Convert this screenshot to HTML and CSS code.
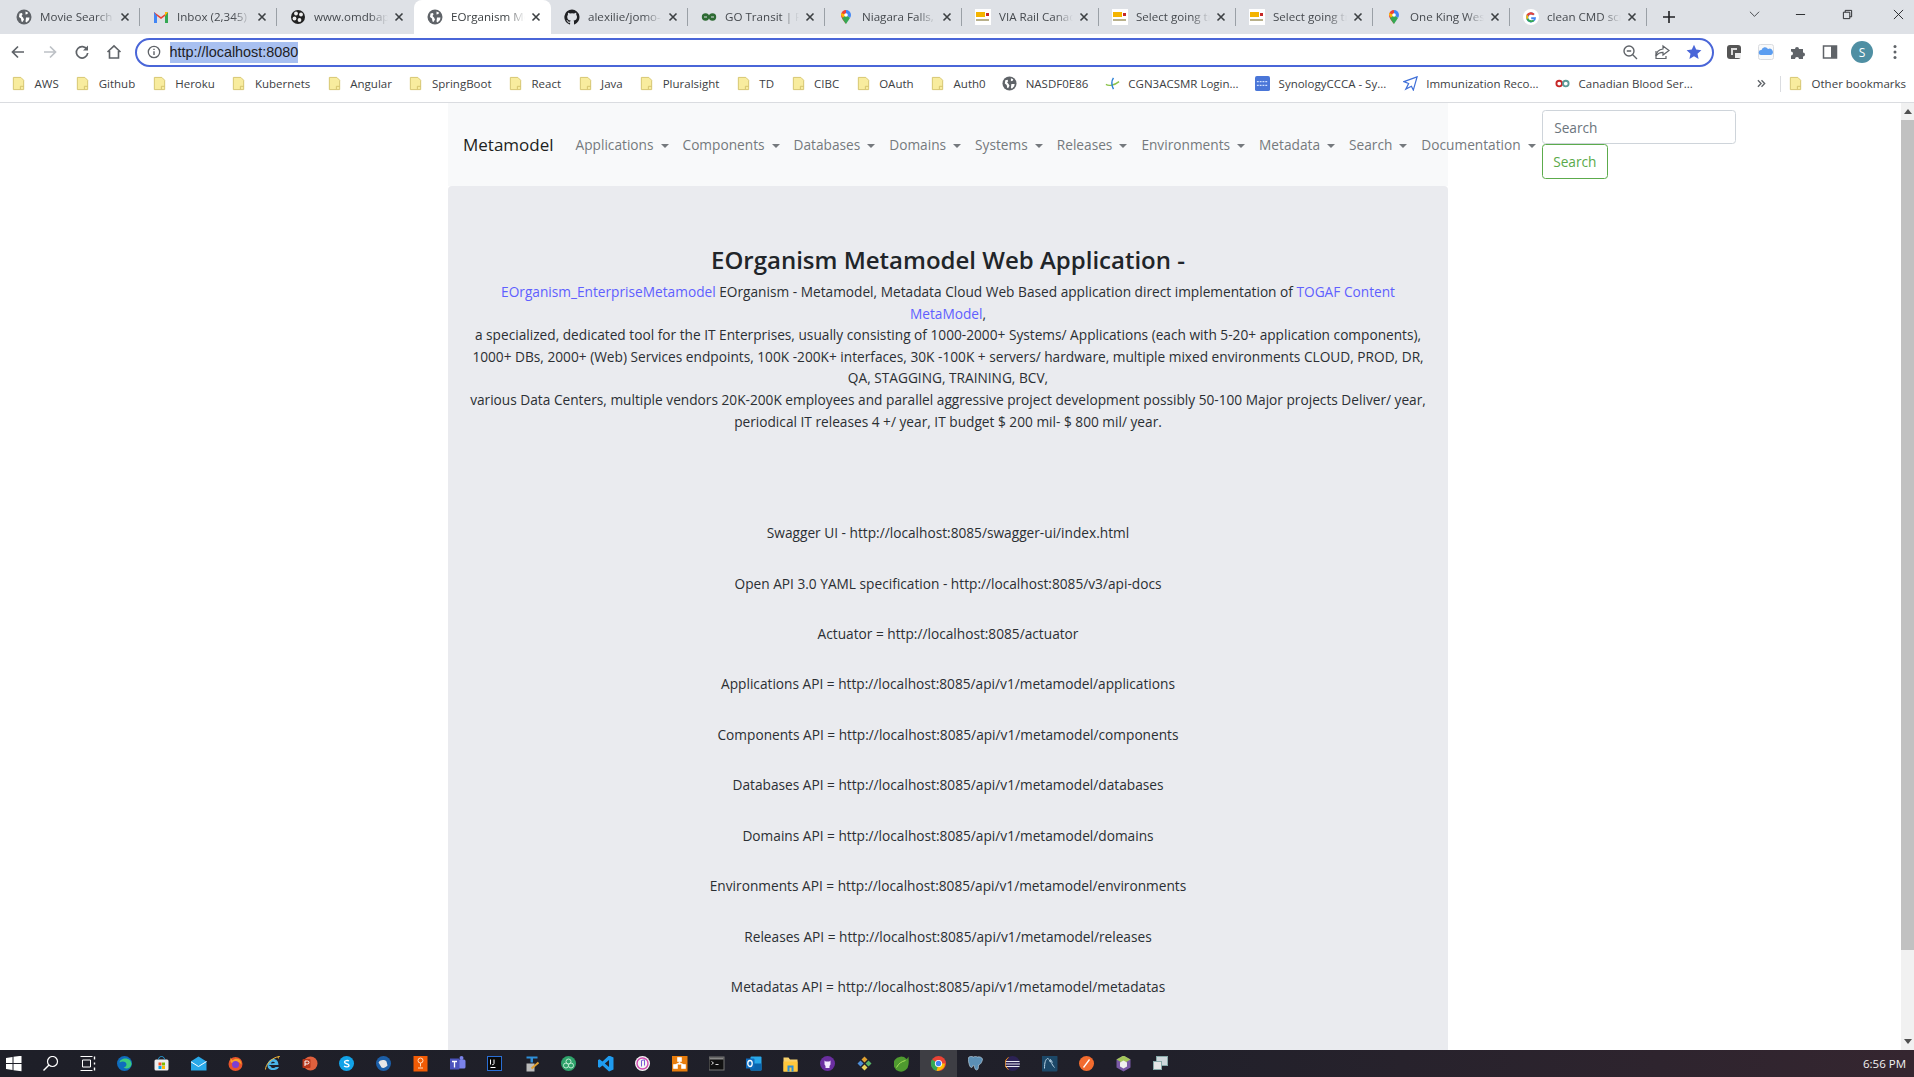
FILE: index.html
```html
<!DOCTYPE html>
<html lang="en">
<head>
<meta charset="utf-8">
<title>EOrganism Metamodel</title>
<link rel="stylesheet" href="styles.css">
</head>
<body>
<svg class="defs" width="0" height="0">
  <symbol id="globe" viewBox="0 0 16 16"><circle cx="8" cy="8" r="7.500" fill="#5f6368"/><path d="M3.500 4.500l2.500-.5.500 1.500-1 1.500 1.500 1.500 1 2-1.500 2.500-1-.5-.5-3-2-1.500zM9.500 2.500l2.500 1-.5 1.500-2 .5zM10 8.500h3.500l-.5 2.500-2.500 2.500-1-1z" fill="#fff"/></symbol>
  <symbol id="folder" viewBox="0 0 16 16"><path d="M2.500 1.500h8l3 3v10h-11z" fill="#f8ec9e" stroke="#d4c36c"/><path d="M10 14v-3h3.500" fill="none" stroke="#d4c36c"/></symbol>
  <symbol id="close" viewBox="0 0 10 10"><path d="M1.500 1.500l7 7M8.500 1.500l-7 7" stroke="#3c4043" stroke-width="1.600" fill="none"/></symbol>
  <symbol id="pin" viewBox="0 0 16 16"><path d="M8 1a5 5 0 0 0-5 5c0 3.500 5 9 5 9z" fill="#ea4335"/><path d="M8 1a5 5 0 0 1 5 5c0 1-.4 2-1 3L8 6z" fill="#4285f4"/><path d="M4 9c1 2 4 6 4 6l4-6-4-3z" fill="#34a853"/><path d="M3.300 4L8 6 5 8.500 3 6z" fill="#fbbc04"/><circle cx="8" cy="6" r="1.800" fill="#fff"/></symbol>
  <symbol id="via" viewBox="0 0 16 16"><rect width="16" height="16" fill="#fff"/><rect x="1" y="3" width="9" height="5" fill="#f4b400"/><rect x="11" y="4" width="3" height="3" fill="#c62828"/><rect x="1" y="10" width="13" height="2" fill="#b8b08a"/></symbol>
  <symbol id="g" viewBox="0 0 16 16"><circle cx="8" cy="8" r="8" fill="#fff"/><path d="M13 8.300H8.200v2h2.700a3 3 0 1 1-.8-4l1.500-1.400A5 5 0 1 0 13 8.300z" fill="#4285f4"/><path d="M3.600 5.500a5 5 0 0 1 8-.6L10.100 6.300a3 3 0 0 0-4.800 1z" fill="#ea4335"/><path d="M3.200 8a5 5 0 0 0 .4 2.500l1.700-1.300a3 3 0 0 1 0-1.900L3.600 5.500A5 5 0 0 0 3.200 8z" fill="#fbbc04"/><path d="M3.600 10.500a5 5 0 0 0 7.800 1.500l-1.500-1.300a3 3 0 0 1-4.600-1.500z" fill="#34a853"/></symbol>
</svg>

<div class="browser">
  <div class="tabstrip">
    <div class="tab"><svg class="fav"><use href="#globe"/></svg><span class="tab-title">Movie Search</span><svg class="tab-x"><use href="#close"/></svg></div>
    <div class="tab"><svg class="fav" viewBox="0 0 16 16"><path d="M1 3v11h3V7l4 3 4-3v7h3V3l-7 5z" fill="#ea4335"/><path d="M1 3v11h3V7z" fill="#4285f4"/><path d="M12 7v7h3V3z" fill="#34a853"/><path d="M15 3l-3 4V3z" fill="#fbbc04"/></svg><span class="tab-title">Inbox (2,345)</span><svg class="tab-x"><use href="#close"/></svg></div>
    <div class="tab no-sep"><svg class="fav" viewBox="0 0 16 16"><circle cx="8" cy="8" r="7" fill="#222"/><circle cx="6" cy="4.500" r="1.900" fill="#eee"/><circle cx="11" cy="5.500" r="1.900" fill="#eee"/><circle cx="4.500" cy="9.500" r="1.900" fill="#eee"/><circle cx="9.500" cy="11" r="1.900" fill="#eee"/></svg><span class="tab-title">www.omdbapi</span><svg class="tab-x"><use href="#close"/></svg></div>
    <div class="tab active"><svg class="fav"><use href="#globe"/></svg><span class="tab-title">EOrganism Meta</span><svg class="tab-x"><use href="#close"/></svg></div>
    <div class="tab"><svg class="fav" viewBox="0 0 16 16"><path d="M8 .5a7.700 7.700 0 0 0-2.400 15c.4.100.5-.2.500-.4v-1.400c-2.100.5-2.600-1-2.600-1-.3-.9-.8-1.100-.8-1.100-.7-.5.100-.5.100-.5.800.100 1.200.8 1.200.8.700 1.200 1.800.8 2.200.6.100-.5.300-.8.500-1-1.700-.2-3.500-.9-3.500-3.800 0-.8.300-1.500.8-2-.1-.2-.3-1 .1-2 0 0 .6-.2 2.100.8a7 7 0 0 1 3.800 0c1.500-1 2.100-.8 2.100-.8.400 1 .2 1.800.1 2 .5.500.8 1.200.8 2 0 2.900-1.800 3.600-3.500 3.800.3.200.5.700.5 1.400v2.100c0 .2.100.5.500.4A7.700 7.700 0 0 0 8 .5z" fill="#202124"/></svg><span class="tab-title">alexilie/jomo-</span><svg class="tab-x"><use href="#close"/></svg></div>
    <div class="tab"><svg class="fav" viewBox="0 0 16 16"><circle cx="4.500" cy="8" r="3.700" fill="#2e6b34"/><circle cx="11.500" cy="8" r="3.700" fill="#2e6b34"/><path d="M3 8h3M10 8h3" stroke="#dee1e6"/></svg><span class="tab-title">GO Transit | Re</span><svg class="tab-x"><use href="#close"/></svg></div>
    <div class="tab"><svg class="fav"><use href="#pin"/></svg><span class="tab-title">Niagara Falls, O</span><svg class="tab-x"><use href="#close"/></svg></div>
    <div class="tab"><svg class="fav"><use href="#via"/></svg><span class="tab-title">VIA Rail Canada</span><svg class="tab-x"><use href="#close"/></svg></div>
    <div class="tab"><svg class="fav"><use href="#via"/></svg><span class="tab-title">Select going tr</span><svg class="tab-x"><use href="#close"/></svg></div>
    <div class="tab"><svg class="fav"><use href="#via"/></svg><span class="tab-title">Select going tr</span><svg class="tab-x"><use href="#close"/></svg></div>
    <div class="tab"><svg class="fav"><use href="#pin"/></svg><span class="tab-title">One King West</span><svg class="tab-x"><use href="#close"/></svg></div>
    <div class="tab"><svg class="fav"><use href="#g"/></svg><span class="tab-title">clean CMD scr</span><svg class="tab-x"><use href="#close"/></svg></div>
    <svg class="newtab" viewBox="0 0 12 12"><path d="M6 0v12M0 6h12" stroke="#202124" stroke-width="1.600"/></svg>
    <div class="winctl">
      <svg class="ctl ctl-chev" viewBox="0 0 12 12"><path d="M1 3l5 5 5-5" fill="none" stroke="#3c4043"/></svg>
      <svg class="ctl ctl-min" viewBox="0 0 12 12"><path d="M1 6h10" stroke="#202124"/></svg>
      <svg class="ctl ctl-max" viewBox="0 0 12 12"><path d="M1.500 3.500h7v7h-7zM3.500 3.500v-2h7v7h-2" fill="none" stroke="#202124"/></svg>
      <svg class="ctl ctl-cls" viewBox="0 0 12 12"><path d="M1 1l10 10M11 1L1 11" stroke="#202124"/></svg>
    </div>
  </div>

  <div class="toolbar">
    <svg class="tool" viewBox="0 0 16 16"><path d="M14 8H2.500M8 2.500L2.500 8 8 13.500" fill="none" stroke="#5f6368" stroke-width="1.700"/></svg>
    <svg class="tool" viewBox="0 0 16 16"><path d="M2 8h11.500M8 2.500L13.500 8 8 13.500" fill="none" stroke="#bdc1c6" stroke-width="1.700"/></svg>
    <svg class="tool" viewBox="0 0 16 16"><path d="M13 5.500A5.700 5.700 0 1 0 13.700 9" fill="none" stroke="#5f6368" stroke-width="1.700"/><path d="M14 1.500v5h-5z" fill="#5f6368"/></svg>
    <svg class="tool" viewBox="0 0 16 16"><path d="M1.500 8L8 1.800 14.500 8M3.500 7v7h9V7" fill="none" stroke="#5f6368" stroke-width="1.600"/></svg>
    <div class="omnibox">
      <svg class="info" viewBox="0 0 16 16"><circle cx="8" cy="8" r="6.500" fill="none" stroke="#5f6368" stroke-width="1.500"/><path d="M8 7v4.500M8 4.200v1.600" stroke="#5f6368" stroke-width="1.600"/></svg>
      <span class="url">http://localhost:8080</span>
      <span class="omni-actions">
        <svg class="omni-ico" viewBox="0 0 16 16"><circle cx="7" cy="7" r="5" fill="none" stroke="#5f6368" stroke-width="1.400"/><path d="M10.500 10.500L15 15M4.800 7h4.400" stroke="#5f6368" stroke-width="1.400"/></svg>
        <svg class="omni-ico" viewBox="0 0 16 16"><path d="M9 2l6 4.500L9 11V8.300C5.500 8.300 3.500 9.800 2 12c.4-4 3-6.500 7-7z" fill="none" stroke="#5f6368" stroke-width="1.200"/><path d="M2 7v7.500h10V12" fill="none" stroke="#5f6368" stroke-width="1.200"/></svg>
        <svg class="omni-ico" viewBox="0 0 16 16"><path d="M8 .8l2.200 4.800 5.200.6-3.900 3.500 1.100 5.200L8 12.300l-4.600 2.600 1.100-5.200L.6 6.200l5.200-.6z" fill="#4a66d8"/></svg>
      </span>
    </div>
    <div class="tool-right">
      <svg class="ext" viewBox="0 0 16 16"><rect x="1" y="1" width="14" height="14" rx="3" fill="#555"/><path d="M5 4h6v2H7v5H5z" fill="#ddd"/><rect x="9" y="9" width="6" height="5" fill="#eee"/></svg>
      <svg class="ext" viewBox="0 0 16 16"><rect x=".5" y=".5" width="15" height="15" rx="2" fill="#f8f9fa" stroke="#dadce0"/><path d="M3 11a2.500 2.500 0 0 1 .5-5A3.500 3.500 0 0 1 10 5a3 3 0 0 1 3 6z" fill="#5b9df0"/></svg>
      <svg class="ext" viewBox="0 0 16 16"><path d="M1 5h4a2 2 0 1 1 4 0h4v3.500a2 2 0 1 1 0 4V15H9a2 2 0 1 0-4 0H1v-3.500a2 2 0 1 0 0-4z" fill="#5f6368"/></svg>
      <svg class="ext" viewBox="0 0 16 16"><rect x="1.500" y="2" width="13" height="12" fill="none" stroke="#5f6368" stroke-width="1.500"/><rect x="9" y="2" width="5.500" height="12" fill="#5f6368"/></svg>
      <span class="avatar">S</span>
      <svg class="dots" viewBox="0 0 4 16"><circle cx="2" cy="2.500" r="1.500" fill="#5f6368"/><circle cx="2" cy="8" r="1.500" fill="#5f6368"/><circle cx="2" cy="13.500" r="1.500" fill="#5f6368"/></svg>
    </div>
  </div>

  <div class="bookmarks">
    <span class="bm"><svg class="bm-ico"><use href="#folder"/></svg>AWS</span>
    <span class="bm"><svg class="bm-ico"><use href="#folder"/></svg>Github</span>
    <span class="bm"><svg class="bm-ico"><use href="#folder"/></svg>Heroku</span>
    <span class="bm"><svg class="bm-ico"><use href="#folder"/></svg>Kubernets</span>
    <span class="bm"><svg class="bm-ico"><use href="#folder"/></svg>Angular</span>
    <span class="bm"><svg class="bm-ico"><use href="#folder"/></svg>SpringBoot</span>
    <span class="bm"><svg class="bm-ico"><use href="#folder"/></svg>React</span>
    <span class="bm"><svg class="bm-ico"><use href="#folder"/></svg>Java</span>
    <span class="bm"><svg class="bm-ico"><use href="#folder"/></svg>Pluralsight</span>
    <span class="bm"><svg class="bm-ico"><use href="#folder"/></svg>TD</span>
    <span class="bm"><svg class="bm-ico"><use href="#folder"/></svg>CIBC</span>
    <span class="bm"><svg class="bm-ico"><use href="#folder"/></svg>OAuth</span>
    <span class="bm"><svg class="bm-ico"><use href="#folder"/></svg>Auth0</span>
    <span class="bm"><svg class="bm-ico"><use href="#globe"/></svg>NASDF0E86</span>
    <span class="bm"><svg class="bm-ico" viewBox="0 0 16 16"><path d="M1 9c3 2 9 1 14-3" fill="none" stroke="#8bc34a" stroke-width="1.500"/><path d="M9 2c-2 3-2 8 0 12" fill="none" stroke="#2a7fd5" stroke-width="1.500"/></svg>CGN3ACSMR Login...</span>
    <span class="bm"><svg class="bm-ico" viewBox="0 0 16 16"><rect width="16" height="16" rx="2" fill="#4a76d8"/><path d="M2 6h12M2 10h12" stroke="#cfe0ff" stroke-width="1.500" stroke-dasharray="2 1"/></svg>SynologyCCCA - Sy...</span>
    <span class="bm"><svg class="bm-ico" viewBox="0 0 16 16"><path d="M15 1L1 6l5 2-3 6 6-3 2 4z" fill="none" stroke="#3f6fd8" stroke-width="1.300"/></svg>Immunization Reco...</span>
    <span class="bm"><svg class="bm-ico" viewBox="0 0 16 16"><circle cx="4.500" cy="8" r="3" fill="none" stroke="#c62828" stroke-width="2"/><circle cx="11.500" cy="8" r="3" fill="none" stroke="#5a9a98" stroke-width="2"/></svg>Canadian Blood Ser...</span>
    <span class="bm-more">
      <svg class="chev2" viewBox="0 0 10 10"><path d="M1 1.500L4.500 5 1 8.500M5 1.500L8.500 5 5 8.500" fill="none" stroke="#5f6368" stroke-width="1.500"/></svg>
      <span class="bm-sep"></span>
      <span class="bm"><svg class="bm-ico"><use href="#folder"/></svg>Other bookmarks</span>
    </span>
  </div>

  <div class="viewport">
    <div class="page">
      <main class="container">
        <nav class="navbar">
          <a class="brand">Metamodel</a>
          <ul class="nav">
            <li class="nav-item">Applications</li>
            <li class="nav-item">Components</li>
            <li class="nav-item">Databases</li>
            <li class="nav-item">Domains</li>
            <li class="nav-item">Systems</li>
            <li class="nav-item">Releases</li>
            <li class="nav-item">Environments</li>
            <li class="nav-item">Metadata</li>
            <li class="nav-item">Search</li>
            <li class="nav-item">Documentation</li>
          </ul>
          <form class="search">
            <input class="search-input" type="text" placeholder="Search">
            <button class="search-btn" type="button">Search</button>
          </form>
        </nav>
        <section class="jumbotron">
          <h1 class="title">EOrganism Metamodel Web Application -</h1>
          <p class="intro"><a class="link">EOrganism_EnterpriseMetamodel</a> EOrganism - Metamodel, Metadata Cloud Web Based application direct implementation of <a class="link">TOGAF Content<br>MetaModel</a>,<br>
          a specialized, dedicated tool for the IT Enterprises, usually consisting of 1000-2000+ Systems/ Applications (each with 5-20+ application components),<br>
          1000+ DBs, 2000+ (Web) Services endpoints, 100K -200K+ interfaces, 30K -100K + servers/ hardware, multiple mixed environments CLOUD, PROD, DR,<br>
          QA, STAGGING, TRAINING, BCV,<br>
          various Data Centers, multiple vendors 20K-200K employees and parallel aggressive project development possibly 50-100 Major projects Deliver/ year,<br>
          periodical IT releases 4 +/ year, IT budget $ 200 mil- $ 800 mil/ year.</p>
          <ul class="api-list">
            <li>Swagger UI - http://localhost:8085/swagger-ui/index.html</li>
            <li>Open API 3.0 YAML specification - http://localhost:8085/v3/api-docs</li>
            <li>Actuator = http://localhost:8085/actuator</li>
            <li>Applications API = http://localhost:8085/api/v1/metamodel/applications</li>
            <li>Components API = http://localhost:8085/api/v1/metamodel/components</li>
            <li>Databases API = http://localhost:8085/api/v1/metamodel/databases</li>
            <li>Domains API = http://localhost:8085/api/v1/metamodel/domains</li>
            <li>Environments API = http://localhost:8085/api/v1/metamodel/environments</li>
            <li>Releases API = http://localhost:8085/api/v1/metamodel/releases</li>
            <li>Metadatas API = http://localhost:8085/api/v1/metamodel/metadatas</li>
          </ul>
        </section>
      </main>
    </div>
    <div class="scrollbar">
      <span class="arrow-up"></span>
      <span class="track"><span class="thumb"></span></span>
      <span class="arrow-down"></span>
    </div>
  </div>

  <footer class="taskbar">
    <svg class="tb" viewBox="0 0 16 16"><path d="M0 2.500l7-1v6H0zM8 1.300l8-1.100v7.300H8zM0 8.500h7v6l-7-1zM8 8.500h8v7.300l-8-1.100z" fill="#fff"/></svg>
    <svg class="tb" viewBox="0 0 16 16"><circle cx="10" cy="6" r="5" fill="none" stroke="#fff" stroke-width="1.200"/><path d="M6.500 9.500L1 15" stroke="#fff" stroke-width="1.400"/></svg>
    <svg class="tb" viewBox="0 0 16 16"><path d="M1 1h12M1 15h12M3 4.500h8v7H3z" fill="none" stroke="#fff"/><path d="M15 1v3M15 7v2M15 12v3" stroke="#fff" stroke-width="1.400"/></svg>
    <svg class="tb" viewBox="0 0 16 16"><circle cx="8" cy="8" r="7.500" fill="#0f6cbd"/><path d="M15 9c0-4-3-6-6-6S3 5 3 7c3-2 7-1 7 2 0 2-2 3-3 3 3 2 7 1 8-3z" fill="#3ccb7f"/></svg>
    <svg class="tb" viewBox="0 0 16 16"><rect x="1" y="4" width="14" height="11" rx="1.500" fill="#eee"/><path d="M5 4c0-4 6-4 6 0" fill="none" stroke="#2aa4e0"/><path d="M5 7h3v3H5z" fill="#f25022"/><path d="M8.500 7h3v3h-3z" fill="#7fba00"/><path d="M5 10.500h3v3H5z" fill="#00a4ef"/><path d="M8.500 10.500h3v3h-3z" fill="#ffb900"/></svg>
    <svg class="tb" viewBox="0 0 16 16"><path d="M0 6l8-5 8 5v9H0z" fill="#29a8e8"/><path d="M0 6l8 5 8-5" fill="none" stroke="#fff"/></svg>
    <svg class="tb" viewBox="0 0 16 16"><circle cx="8" cy="8.500" r="7" fill="#e8542b"/><path d="M3 2c1 1 1 2 2 3 2-2 5-2 7-1 1 1 2 3 2 5-2-3-5-3-7-2-2 1-3 1-4-1z" fill="#f7a12b"/><circle cx="8" cy="9" r="3.500" fill="#7a3fd1"/></svg>
    <svg class="tb" viewBox="0 0 16 16"><path d="M4 9.500h10C14 5 11 3 8 3.500S2.500 7 3 10.500 7 15 10 14.500s4-2 4.500-3H11c-1 1.500-4 1.500-4.700-.5z" fill="#4ab5e8"/><path d="M6.500 8c0-2 3-2.500 4-.5z" fill="#1f1f28"/><path d="M1 14C1 9 7 2 15 1c-2 0-1 2-1 2" fill="none" stroke="#f4b93c"/></svg>
    <svg class="tb" viewBox="0 0 16 16"><circle cx="9" cy="8" r="7" fill="#e0603d"/><rect x="1" y="3.500" width="8" height="9" rx="1" fill="#b7361b"/><path d="M3.500 10.500v-5H6a1.400 1.400 0 0 1 0 3H3.500" fill="none" stroke="#fff"/></svg>
    <svg class="tb" viewBox="0 0 16 16"><circle cx="8" cy="8" r="7.500" fill="#12a3e8"/><path d="M10.500 5.500C9 4.500 6 5 6 6.500 6 9 10.500 7.500 10.500 10c0 1.500-3 2-5 .5" fill="none" stroke="#fff" stroke-width="1.400"/></svg>
    <svg class="tb" viewBox="0 0 16 16"><circle cx="8" cy="8" r="7.500" fill="#1c5fa8"/><path d="M3 7c2-3 6-3 8-1l1 4c-2 2-4 3-6 2-1-2-2-3-3-5z" fill="#e6e6e6"/></svg>
    <svg class="tb" viewBox="0 0 16 16"><rect x="1" width="14" height="16" fill="#f25c05"/><circle cx="8" cy="5" r="2.500" fill="none" stroke="#ffe0c2"/><path d="M8 7.500V11M5.500 12.500h5" stroke="#ffe0c2"/></svg>
    <svg class="tb" viewBox="0 0 16 16"><rect x="9" y="4" width="7" height="9" rx="1.500" fill="#7b83eb"/><circle cx="12" cy="2.500" r="2" fill="#7b83eb"/><rect x="0" y="3" width="10" height="11" rx="1" fill="#4b53bc"/><path d="M2.500 6h5M5 6v6" stroke="#fff" stroke-width="1.300"/></svg>
    <svg class="tb" viewBox="0 0 16 16"><rect x="1" y="1" width="14" height="14" fill="#0a0a0a" stroke="#2b6fd6"/><path d="M4 4v5M7.500 4v4c0 1-1 1.500-2 1M4 12h5" stroke="#fff"/></svg>
    <svg class="tb" viewBox="0 0 16 16"><path d="M3 1h11v2H9.500v4H7V3H3z" fill="#2f8fd8"/><rect x="3" y="8" width="8" height="8" fill="#bbb"/><path d="M8 13l7-6" stroke="#e0a030" stroke-width="2"/></svg>
    <svg class="tb" viewBox="0 0 16 16"><circle cx="8" cy="8" r="7.500" fill="#2fa36b"/><circle cx="8" cy="6" r="2.500" fill="none" stroke="#bde8cf"/><circle cx="5.500" cy="10" r="2.500" fill="none" stroke="#bde8cf"/><circle cx="10.500" cy="10" r="2.500" fill="none" stroke="#bde8cf"/></svg>
    <svg class="tb" viewBox="0 0 16 16"><path d="M11.500 0L5 6 2 3.700 0 4.700v6.600l2 1L5 10l6.500 6 4.500-2V2zM11.500 4.500v7L7.300 8z" fill="#1f9cf0"/></svg>
    <svg class="tb" viewBox="0 0 16 16"><circle cx="8" cy="8" r="7.500" fill="#f4f4f4"/><circle cx="8" cy="8" r="5.500" fill="none" stroke="#d14bb0" stroke-width="1.400"/><path d="M7 11V5l3-.7v5.700" fill="none" stroke="#7a5ad6"/></svg>
    <svg class="tb" viewBox="0 0 16 16"><rect width="16" height="16" fill="#e87d0d"/><path d="M6 2h4v4H6zM2 9h4v4H2zM10 9h4v4h-4zM8 6v3M4 9l4-2 4 2" fill="#fff" stroke="#fff" stroke-width=".6"/></svg>
    <svg class="tb" viewBox="0 0 16 16"><rect x=".5" y="1.500" width="15" height="13" fill="#111" stroke="#777"/><rect x="1" y="2" width="14" height="2" fill="#888"/><path d="M3 6l2 1.500L3 9M7 9h3" stroke="#ddd" fill="none"/></svg>
    <svg class="tb" viewBox="0 0 16 16"><rect x="5" y="1" width="11" height="14" rx="1" fill="#28a8ea"/><path d="M5 8h11v7H5z" fill="#0a64ad"/><rect y="3" width="9" height="10" rx="1" fill="#0f6cbd"/><ellipse cx="4.500" cy="8" rx="2.200" ry="3" fill="none" stroke="#fff" stroke-width="1.300"/></svg>
    <svg class="tb" viewBox="0 0 16 16"><path d="M1 2h5l1.500 2H15v12H1z" fill="#f8d16c"/><rect x="1" y="6" width="14" height="10" fill="#ffc83d"/><rect x="5" y="10" width="6" height="6" fill="#2a8fd8"/><rect x="7" y="12" width="2" height="4" fill="#ffc83d"/></svg>
    <svg class="tb" viewBox="0 0 16 16"><circle cx="8" cy="8" r="7.500" fill="#6a2ea0"/><path d="M5 5l1.200 1h3.600L11 5v4l-1 1.500v2H6v-2L5 9z" fill="#f4e9ff"/></svg>
    <svg class="tb" viewBox="0 0 16 16"><path d="M8 1l3 3-3 3-3-3z" fill="#e0a030"/><path d="M8 9l3 3-3 3-3-3z" fill="#e8d45c"/><path d="M1 8l3-3 3 3-3 3z" fill="#4e8ed8"/><path d="M9 8l3-3 3 3-3 3z" fill="#58b368"/></svg>
    <svg class="tb" viewBox="0 0 16 16"><path d="M15 1c0 0-1 2-2 2.500A7.500 7.500 0 1 0 15 9C15.500 6 15 3 15 1z" fill="#4f9a2f"/><path d="M3 12c2-4 5-6 9-7" fill="none" stroke="#a6e05a"/></svg>
    <svg class="tb tb-active" viewBox="0 0 16 16"><circle cx="8" cy="8" r="7.500" fill="#ea4335"/><path d="M8 8l6.500 0A7.500 7.500 0 0 1 6 15.300z" fill="#fbbc04"/><path d="M8 8L6 15.300A7.500 7.500 0 0 1 1.500 4z" fill="#34a853"/><circle cx="8" cy="8" r="3.600" fill="#fff"/><circle cx="8" cy="8" r="2.700" fill="#4285f4"/></svg>
    <svg class="tb" viewBox="0 0 16 16"><path d="M3 1c-2 0-3 2-2 5 .5 2 1 6 3 6 1.200 0 1-2 2-2.500 1 .5 1 5 3 5s2-3 2-5c2 0 4-4 4-6-1-2-3-2.500-5-2-1-.5-2.500-1-4 0C5 1 4 1 3 1z" fill="#5b8fb5" stroke="#c9dbe8" stroke-width=".6"/></svg>
    <svg class="tb" viewBox="0 0 16 16"><circle cx="8" cy="8" r="7.500" fill="#2c2255"/><path d="M1 6h14M.6 8.500h14.800M1 11h14" stroke="#e8e8f2" stroke-width="1.200"/><path d="M4 2a7 7 0 0 0 0 12" fill="none" stroke="#f7941e"/></svg>
    <svg class="tb" viewBox="0 0 16 16"><rect width="16" height="16" rx="1.500" fill="#1c4868"/><path d="M3 13c0-6 1-9 3-10 3 1 4 6 7 9M8 6l1-2 2 3" fill="none" stroke="#b9d4e6"/></svg>
    <svg class="tb" viewBox="0 0 16 16"><circle cx="8" cy="8" r="7.500" fill="#f26b2e"/><path d="M5 12l6-8" stroke="#fff" stroke-width="1.300"/></svg>
    <svg class="tb" viewBox="0 0 16 16"><path d="M8 0l7 4v8l-7 4-7-4V4z" fill="#7a5aa6"/><path d="M8 0l7 4-7 4-7-4z" fill="#a3c65a"/><path d="M8 5l3.500 2v4L8 13l-3.500-2V7z" fill="#f0f0f0"/></svg>
    <svg class="tb" viewBox="0 0 16 16"><rect x="4" y="1" width="11" height="9" fill="#cfd8dc" stroke="#8aa"/><rect x="1" y="6" width="8" height="8" fill="#e6e6e6" stroke="#8aa"/></svg>
    <span class="clock">6:56 PM</span>
  </footer>
</div>
</body>
</html>
```

FILE: styles.css
```css
* { box-sizing: border-box; }
html, body { margin: 0; height: 100%; overflow: hidden; }
body { font-family: "Open Sans", "Liberation Sans", sans-serif; color: #212529; background: #fff; }
.defs { position: absolute; }
.browser { display: flex; flex-direction: column; height: 1077px; }

.tabstrip { height: 34px; flex: none; background: #dee1e6; display: flex; align-items: stretch; padding-left: 3px; }
.tab { width: 137px; flex: none; display: flex; align-items: center; padding: 0 9px 0 12.500px; position: relative; font-size: 11.600px; color: #45494e; }
.tab::after { content: ""; position: absolute; right: 0; top: 8px; height: 18px; width: 1px; background: #9aa0a6; }
.tab.no-sep::after, .tab.active::after { display: none; }
.tab.active { background: #fff; border-radius: 8px 8px 0 0; color: #3c4043; }
.fav { width: 16px; height: 16px; flex: none; }
.tab-title { margin-left: 8.500px; width: 74px; overflow: hidden; white-space: nowrap; -webkit-mask-image: linear-gradient(90deg, #000 75%, transparent 100%); mask-image: linear-gradient(90deg, #000 75%, transparent 100%); position: relative; top: -1px; }
.tab-x { width: 10px; height: 10px; margin-left: auto; flex: none; margin-right: 1px; }
.newtab { width: 12px; height: 12px; align-self: center; margin-left: 16px; flex: none; }
.winctl { margin-left: auto; display: flex; align-items: flex-start; padding-top: 9px; }
.ctl { width: 11px; height: 11px; flex: none; }
.ctl-min { margin-left: 35px; }
.ctl-max { margin-left: 36px; }
.ctl-cls { margin-left: 40px; margin-right: 10px; }

.toolbar { height: 36px; flex: none; background: #fff; display: flex; align-items: center; padding-left: 10px; }
.tool { width: 16px; height: 16px; flex: none; margin-right: 16px; }
.toolbar .tool:nth-child(4) { margin-right: 13px; }
.omnibox { width: 1578.500px; height: 29px; flex: none; border: 2px solid #4a66d8; border-radius: 15px; display: flex; align-items: center; padding: 0 9.500px 0 10px; }
.info { width: 14px; height: 14px; flex: none; }
.url { margin-left: 8.500px; background: #a8c0f0; font-family: "Liberation Sans", sans-serif; font-size: 14.400px; line-height: 21px; color: #202124; }
.omni-actions { margin-left: auto; display: flex; gap: 16px; align-items: center; }
.omni-ico { width: 16px; height: 16px; flex: none; }
.tool-right { display: flex; align-items: center; margin-left: 12.500px; flex: 1; }
.ext { width: 16px; height: 16px; flex: none; margin-right: 16px; }
.avatar { width: 22px; height: 22px; border-radius: 50%; background: #4f8fa3; color: #fff; font-size: 12px; display: flex; align-items: center; justify-content: center; flex: none; margin-left: -3px; }
.dots { width: 4px; height: 16px; margin-left: 20px; flex: none; }

.bookmarks { height: 33px; flex: none; background: #fff; border-bottom: 1px solid #dadce0; display: flex; align-items: center; padding: 0 8px 5px 11px; gap: 16.500px; font-size: 11.500px; color: #3c4043; white-space: nowrap; }
.bm { display: flex; align-items: center; gap: 8.500px; flex: none; }
.bm-ico { width: 15px; height: 15px; flex: none; }
.bm-more { margin-left: auto; display: flex; align-items: center; }
.chev2 { width: 9px; height: 9px; }
.bm-sep { width: 1px; height: 16px; background: #dadce0; margin: 0 7px 0 14px; }

.viewport { flex: 1; min-height: 0; display: flex; }
.page { flex: 1; min-width: 0; overflow: hidden; padding-left: 448px; }
.container { width: 1000px; }
.navbar { height: 83px; background: #f8f9fa; display: flex; align-items: center; padding-left: 15px; }
.brand { font-size: 17px; color: #1d1f21; margin-right: 15px; flex: none; }
.nav { list-style: none; display: flex; margin: 0; padding: 0; flex: none; }
.nav-item { font-size: 13.700px; color: #75797d; padding: 0 7px; white-space: nowrap; }
.nav-item::after { content: ""; display: inline-block; margin-left: 7px; vertical-align: 2px; border-top: 4.500px solid #75797d; border-left: 4.500px solid transparent; border-right: 4.500px solid transparent; }
.search { display: flex; flex-direction: column; align-items: flex-start; flex: none; margin-left: -0.500px; }
.search-input { width: 194px; height: 34px; border: 1px solid #ced4da; border-radius: 3.500px; padding: 0 11px; font: inherit; font-size: 13.700px; background: #fff; outline: none; }
.search-input::placeholder { color: #6c757d; opacity: 1; }
.search-btn { height: 35px; padding: 0 10px; border: 1px solid #5cab4c; border-radius: 3.500px; color: #5aaa4a; background: #fff; font: inherit; font-size: 13.700px; }
.jumbotron { height: 900px; background: #eaebef; border-radius: 4px; padding-top: 57px; text-align: center; }
.title { margin: 0 0 4px; font-size: 24px; font-weight: 600; line-height: 34px; color: #212529; }
.intro { margin: 0; font-size: 13.700px; line-height: 21.600px; white-space: nowrap; color: #2b2f33; }
.link { color: #5f5fff; }
.api-list { list-style: none; margin: 0; padding: 90px 0 0; font-size: 13.700px; line-height: 21.600px; color: #2b2f33; }
.api-list li { margin-bottom: 28.850px; }

.scrollbar { width: 13px; flex: none; background: #f1f1f1; display: flex; flex-direction: column; align-items: center; }
.arrow-up { margin-top: 6px; border-bottom: 5px solid #505050; border-left: 4px solid transparent; border-right: 4px solid transparent; flex: none; }
.track { flex: 1; width: 100%; padding-top: 6px; }
.thumb { display: block; width: 100%; height: 830px; background: #c1c1c1; }
.arrow-down { margin-bottom: 6px; border-top: 5px solid #505050; border-left: 4px solid transparent; border-right: 4px solid transparent; flex: none; }

.taskbar { height: 27px; flex: none; background: linear-gradient(90deg, #1e1f28 0%, #20202a 60%, #352630 100%); display: flex; align-items: center; margin-left: -5px; }
.tb { width: 37.030px; height: 27px; flex: none; padding: 5.500px 10.500px; }
.tb-active { background: #3e3e44; }
.clock { margin-left: auto; margin-right: 8px; font-size: 11.500px; color: #f2f2f2; }
```
